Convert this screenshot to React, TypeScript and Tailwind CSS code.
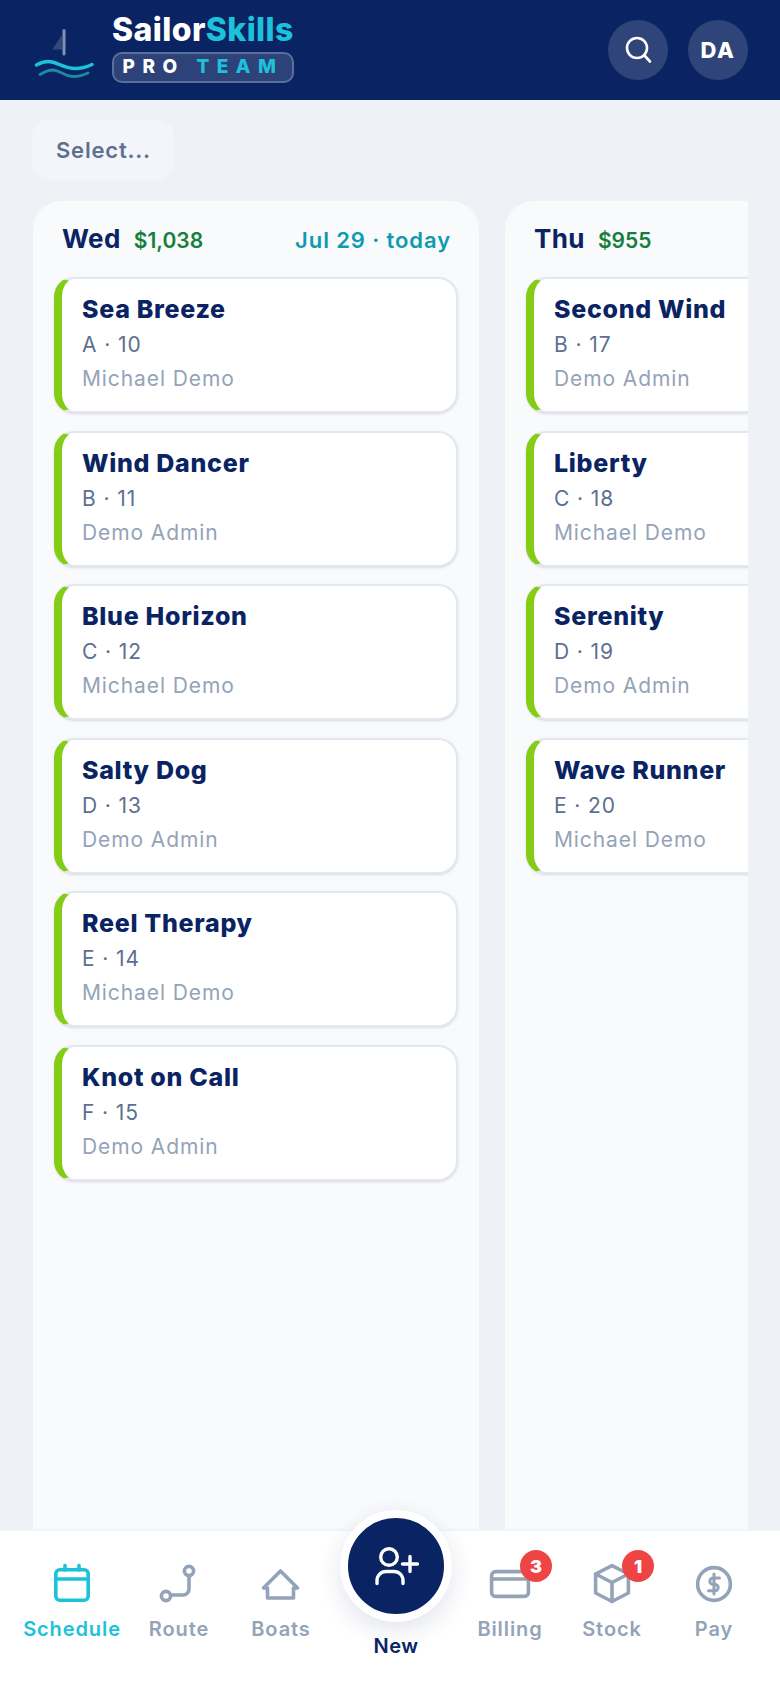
const cards = {
  wed: [
    ["Sea Breeze", "A · 10", "Michael Demo"],
    ["Wind Dancer", "B · 11", "Demo Admin"],
    ["Blue Horizon", "C · 12", "Michael Demo"],
    ["Salty Dog", "D · 13", "Demo Admin"],
    ["Reel Therapy", "E · 14", "Michael Demo"],
    ["Knot on Call", "F · 15", "Demo Admin"],
  ],
  thu: [
    ["Second Wind", "B · 17", "Demo Admin"],
    ["Liberty", "C · 18", "Michael Demo"],
    ["Serenity", "D · 19", "Demo Admin"],
    ["Wave Runner", "E · 20", "Michael Demo"],
  ],
};

const Card = ({ row, clipped }: { row: string[]; clipped?: boolean }) => (
  <div
    className={`h-[136px] shrink-0 rounded-[20px] bg-white border-2 border-[#e2e8f0] border-l-8 border-l-[#84cc16] shadow-sm pl-[20px] pt-[14px] ${
      clipped ? "w-[290px]" : "w-full"
    }`}
  >
    <div className="text-[25px] leading-[32px] font-extrabold text-[#0a2463] tracking-[0.7px] whitespace-nowrap">{row[0]}</div>
    <div className="text-[21px] leading-[28px] mt-[6px] text-[#5c7090] tracking-[0.9px]">{row[1]}</div>
    <div className="text-[21px] leading-[28px] mt-[6px] text-[#94a3b8] tracking-[0.9px]">{row[2]}</div>
  </div>
);

const Column = ({
  day,
  total,
  date,
  rows,
}: {
  day: string;
  total: string;
  date?: string;
  rows: string[][];
}) => (
  <div
    className={`shrink-0 h-full bg-[#f8fafc] overflow-hidden pt-[18px] pl-[21px] ${
      date ? "w-[446px] rounded-t-[28px] pr-[21px]" : "w-[243px] rounded-tl-[28px]"
    }`}
  >
    <div className="flex items-baseline h-[32px] pl-[8px] pr-[7px]">
      <span className="text-[26px] font-bold text-[#0a2463] tracking-[0.4px]">{day}</span>
      <span className="ml-[13px] text-[21px] font-semibold text-[#15803d]">{total}</span>
      {date && <span className="ml-auto text-[22px] font-semibold text-[#0e9aaf] tracking-[0.9px]">{date}</span>}
    </div>
    <div className="mt-[26px] flex flex-col gap-[17.6px]">
      {rows.map((r) => (
        <Card key={r[0]} row={r} clipped={!date} />
      ))}
    </div>
  </div>
);

const NavIcon = ({ children, color = "#94a3b8" }: { children: React.ReactNode; color?: string }) => (
  <svg width="48" height="48" viewBox="0 0 48 48" fill="none" stroke={color} strokeWidth="3.6" strokeLinecap="round" strokeLinejoin="round">
    {children}
  </svg>
);

const NavItem = ({
  label,
  color,
  offset,
  badge,
  children,
}: {
  label: string;
  color: string;
  offset: string;
  badge?: string;
  children: React.ReactNode;
}) => (
  <div className={`relative flex flex-col items-center w-[110px] ${offset}`}>
    <div className="relative h-[48px]">
      {children}
      {badge && (
        <span className="absolute -top-[10px] -right-[18px] w-8 h-8 rounded-full bg-[#ef4444] text-white text-[18px] font-black flex items-center justify-center">
          {badge}
        </span>
      )}
    </div>
    <span className="mt-[9px] text-[20px] leading-[24px] font-semibold tracking-[0.9px]" style={{ color }}>
      {label}
    </span>
  </div>
);

export default function App() {
  return (
    <div className="w-[780px] h-[1688px] flex flex-col overflow-hidden bg-[#eef2f7] font-['Inter','Liberation_Sans',sans-serif]">
      {/* Header */}
      <header className="h-[100px] shrink-0 bg-[#0a2463] flex items-center pl-[30px] pr-[32px]">
        <svg width="66" height="54" viewBox="30 26 66 54" fill="none" className="mt-[6px]">
          <path d="M64 30.5 V54" stroke="#8290b0" strokeWidth="3" strokeLinecap="round" />
          <path d="M62 35 V49.5 H52 Z" fill="#33487f" />
          <path d="M36.5 65 C41 62.5 46 60.5 52 62 C60 64 66 68.5 75 68.5 C82 68.5 87 67 92 64.5" stroke="#1cc1da" strokeWidth="3.5" strokeLinecap="round" />
          <path d="M40 74.5 C44 72 48 70 53 70 C60 70.5 65 76.5 73 76.5 C79 76.5 84 75 88 73" stroke="#1c8aa3" strokeWidth="2.8" strokeLinecap="round" />
        </svg>
        <div className="ml-[16px] self-start mt-[12px] flex flex-col">
          <div className="text-[32px] leading-[36px] font-extrabold tracking-[0.4px] text-white">
            Sailor<span className="text-[#1cc1da]">Skills</span>
          </div>
          <div className="mt-[4px] w-[182px] h-[31px] rounded-[10px] border-2 border-[#5a6f9c] bg-[#2c4279] flex items-center justify-center text-[19px] font-extrabold tracking-[7.5px] text-white">
            PRO&nbsp;<span className="text-[#1cc1da]">TEAM</span>
          </div>
        </div>
        <button className="ml-auto w-[60px] h-[60px] rounded-full bg-[#2f4478] flex items-center justify-center">
          <svg width="30" height="30" viewBox="0 0 30 30" fill="none" stroke="white" strokeWidth="2.6" strokeLinecap="round">
            <circle cx="14" cy="13" r="10" />
            <path d="M21.5 20.5 L27 26.5" />
          </svg>
        </button>
        <button className="ml-5 w-[60px] h-[60px] rounded-full bg-[#2f4478] flex items-center justify-center text-white font-extrabold text-[22px] tracking-[1.5px]">
          DA
        </button>
      </header>

      {/* Filter */}
      <div className="h-[101px] shrink-0 pl-[32px] pt-[20px]">
        <button className="w-[142px] h-[60px] rounded-[16px] bg-[#f3f5fa] text-left pl-[24px] text-[22px] font-semibold tracking-[0.8px] text-[#5c7090]">
          Select...
        </button>
      </div>

      {/* Board */}
      <div className="flex-1 min-h-0 flex pl-[33px] gap-[26px] overflow-hidden">
        <Column day="Wed" total="$1,038" date="Jul 29 · today" rows={cards.wed} />
        <Column day="Thu" total="$955" rows={cards.thu} />
      </div>

      {/* Bottom nav */}
      <nav className="relative h-[159px] shrink-0 bg-white border-t-2 border-[#f1f5f9] flex pt-[29px]">
        <NavItem label="Schedule" color="#1cc1da" offset="ml-[17px]">
          <NavIcon color="#1cc1da">
            <path d="M17 5.5V10M31 5.5V10" />
            <rect x="7.8" y="9.8" width="32.4" height="30.4" rx="4" />
            <path d="M7.8 19H40.2" />
          </NavIcon>
        </NavItem>
        <NavItem label="Route" color="#94a3b8" offset="-ml-[3px]">
          <NavIcon>
            <circle cx="11" cy="36" r="4.6" />
            <circle cx="34" cy="11" r="4.6" />
            <path d="M34 15.6V29a6 6 0 0 1-6 6H15.6" />
          </NavIcon>
        </NavItem>
        <NavItem label="Boats" color="#94a3b8" offset="-ml-[8px]">
          <NavIcon>
            <path d="M10.5 28H6.5L23.5 11L40.5 28H36.5V38H10.5Z" />
          </NavIcon>
        </NavItem>
        <NavItem label="Billing" color="#94a3b8" offset="ml-[119px]" badge="3">
          <NavIcon>
            <rect x="5.6" y="11.6" width="36.8" height="24.8" rx="4" />
            <path d="M5.6 19H42.4" />
          </NavIcon>
        </NavItem>
        <NavItem label="Stock" color="#94a3b8" offset="-ml-[8px]" badge="1">
          <NavIcon>
            <path d="M24 5.6L40.4 14V33L24 41.5L7.6 33V14Z" />
            <path d="M7.6 14L24 22.5L40.4 14M24 22.5V41.5" />
          </NavIcon>
        </NavItem>
        <NavItem label="Pay" color="#94a3b8" offset="-ml-[8px]">
          <NavIcon>
            <circle cx="24" cy="24" r="16.4" />
            <path d="M29.5 18H23a3.2 3.2 0 0 0 0 6.4h2a3.2 3.2 0 0 1 0 6.4H18.5M24 14V34" strokeWidth="3" />
          </NavIcon>
        </NavItem>

        {/* New button sits over the bar */}
        <div className="absolute left-[340px] -top-[21px] flex flex-col items-center w-[112px]">
          <div className="w-[112px] h-[112px] rounded-full bg-[#0a2463] border-8 border-white shadow-[0_8px_24px_rgba(10,36,99,0.12)] flex items-center justify-center">
            <svg width="48" height="48" viewBox="0 0 48 48" fill="none" stroke="white" strokeWidth="3.4" strokeLinecap="round" strokeLinejoin="round">
              <circle cx="17" cy="15" r="8.3" />
              <path d="M5 41.5v-3a9 9 0 0 1 9-9h8a9 9 0 0 1 9 9v3" />
              <path d="M38 14.5v15M30.5 22h15" />
            </svg>
          </div>
          <span className="mt-[12px] text-[20px] leading-[24px] font-semibold tracking-[0.5px] text-[#0a2463]">New</span>
        </div>
      </nav>
    </div>
  );
}
